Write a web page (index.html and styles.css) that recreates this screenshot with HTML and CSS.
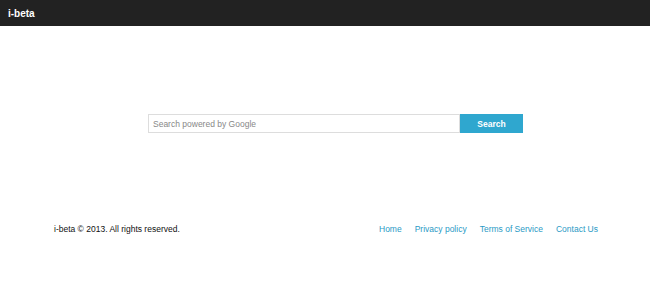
FILE: index.html
```html
<!DOCTYPE html>
<html>
<head>
<meta charset="utf-8">
<link rel="stylesheet" href="styles.css">
</head>
<body>
<header class="topbar"><span class="brand">i-beta</span></header>
<main class="main">
  <form class="search">
    <input class="search-input" type="text" placeholder="Search powered by Google">
    <button class="search-btn" type="button">Search</button>
  </form>
</main>
<footer class="footer">
  <span class="copy">i-beta © 2013. All rights reserved.</span>
  <nav class="links">
    <a href="#">Home</a>
    <a href="#">Privacy policy</a>
    <a href="#">Terms of Service</a>
    <a href="#">Contact Us</a>
  </nav>
</footer>
</body>
</html>
```
FILE: styles.css
```css
html, body { margin: 0; padding: 0; background: #fff; }
body { font-family: "Liberation Sans", Arial, sans-serif; font-size: 8.5px; color: #222; }
.topbar { height: 26px; background: #222; display: flex; align-items: center; padding-left: 8px; }
.brand { color: #fff; font-weight: bold; font-size: 10px; }
.main { padding-top: 88px; padding-left: 148px; height: 193px; box-sizing: border-box; }
.search { display: flex; margin: 0; }
.search-input { width: 312px; height: 19px; box-sizing: border-box; border: 1px solid #ddd; padding: 0 4px; font-family: inherit; font-size: 8.5px; color: #333; outline: none; margin: 0; }
.search-input::placeholder { color: #888; }
.search-btn { width: 63px; height: 19px; border: none; background: #2fa7cf; color: #fff; font-family: inherit; font-weight: bold; font-size: 8.5px; margin: 0; padding: 0; }
.footer { display: flex; justify-content: space-between; align-items: center; padding: 0 52px 0 54px; height: 20px; }
.copy { color: #111; }
.links { display: flex; gap: 13px; }
.links a { color: #2a9ac5; text-decoration: none; }
```
